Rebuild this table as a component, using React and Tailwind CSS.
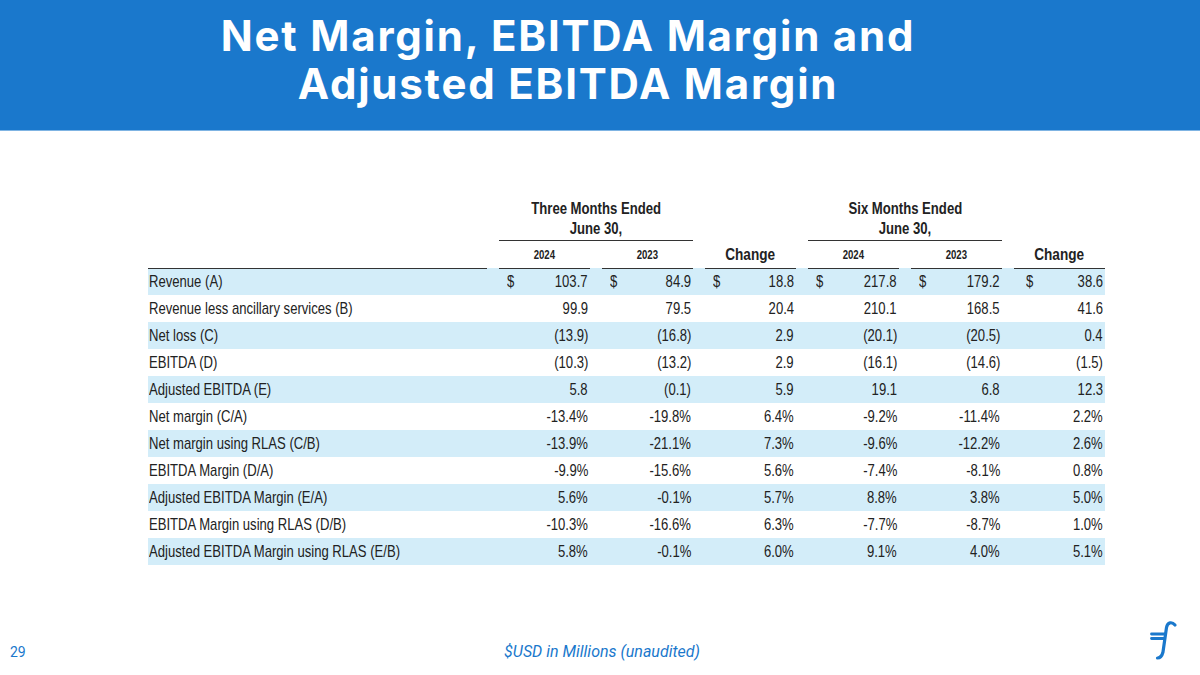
import React from "react";

const sans = { fontFamily: "'Liberation Sans', Arial, sans-serif" };

const rows = [
  ["Revenue (A)", "103.7", "84.9", "18.8", "217.8", "179.2", "38.6"],
  ["Revenue less ancillary services (B)", "99.9", "79.5", "20.4", "210.1", "168.5", "41.6"],
  ["Net loss (C)", "(13.9)", "(16.8)", "2.9", "(20.1)", "(20.5)", "0.4"],
  ["EBITDA (D)", "(10.3)", "(13.2)", "2.9", "(16.1)", "(14.6)", "(1.5)"],
  ["Adjusted EBITDA (E)", "5.8", "(0.1)", "5.9", "19.1", "6.8", "12.3"],
  ["Net margin (C/A)", "-13.4%", "-19.8%", "6.4%", "-9.2%", "-11.4%", "2.2%"],
  ["Net margin using RLAS (C/B)", "-13.9%", "-21.1%", "7.3%", "-9.6%", "-12.2%", "2.6%"],
  ["EBITDA Margin (D/A)", "-9.9%", "-15.6%", "5.6%", "-7.4%", "-8.1%", "0.8%"],
  ["Adjusted EBITDA Margin (E/A)", "5.6%", "-0.1%", "5.7%", "8.8%", "3.8%", "5.0%"],
  ["EBITDA Margin using RLAS (D/B)", "-10.3%", "-16.6%", "6.3%", "-7.7%", "-8.7%", "1.0%"],
  ["Adjusted EBITDA Margin using RLAS (E/B)", "5.8%", "-0.1%", "6.0%", "9.1%", "4.0%", "5.1%"],
];

const gridCols = "grid grid-cols-[339px_repeat(6,91px)] gap-x-3";

function Logo() {
  return (
    <svg width="30" height="42" viewBox="0 0 30 42" fill="none">
      <path
        d="M26 5 C23 1.5 18.5 2 17.5 7.5 L14 32 C13 36 11 38 8.5 38"
        stroke="#1a78cc"
        strokeWidth="3.2"
        strokeLinecap="round"
      />
      <path d="M2.5 14 H15.5 M2.5 18.5 H15" stroke="#1a78cc" strokeWidth="2.8" strokeLinecap="round" />
    </svg>
  );
}

export default function App() {
  return (
    <div className="w-[1200px] h-[675px] bg-white flex flex-col overflow-hidden">
      {/* Title band */}
      <div className="h-[131px] bg-[#1a78cc] border-b border-[#7fb4e3] pt-[12px] pr-[64px] text-center">
        <h1
          className="text-white font-bold text-[42px] leading-[48px] tracking-[1.8px]"
          style={{ fontFamily: "Inter, Roboto, 'Liberation Sans', sans-serif" }}
        >
          Net Margin, EBITDA Margin and
          <br />
          Adjusted EBITDA Margin
        </h1>
      </div>

      {/* Table */}
      <div className="pl-[148px] pt-[68px] text-[#222]" style={sans}>
        <div className="w-fit">
          <div className={gridCols}>
            <div />
            <div className="col-span-2 text-center font-bold text-[16px] leading-[20px] border-b-[1.5px] border-[#333] pb-[1px]">
              <span className="inline-block scale-x-[0.82] whitespace-nowrap">Three Months Ended</span>
              <br />
              <span className="inline-block scale-x-[0.82]">June 30,</span>
            </div>
            <div />
            <div className="col-span-2 text-center font-bold text-[16px] leading-[20px] border-b-[1.5px] border-[#333] pb-[1px]">
              <span className="inline-block scale-x-[0.82] whitespace-nowrap">Six Months Ended</span>
              <br />
              <span className="inline-block scale-x-[0.82]">June 30,</span>
            </div>
            <div />
          </div>
          <div className={`${gridCols} h-[27px]`}>
            <div className="border-b-[1.5px] border-[#333]" />
            {["2024", "2023", "Change", "2024", "2023", "Change"].map((h, i) => (
              <div
                key={i}
                className={`border-b-[1.5px] border-[#333] flex items-center justify-center font-bold ${
                  h === "Change" ? "text-[17px] pt-[1px]" : "text-[12px] pt-[2px]"
                }`}
              >
                <span className="inline-block scale-x-[0.8]">{h}</span>
              </div>
            ))}
          </div>
          {rows.map((r, idx) => (
            <div
              key={idx}
              className={`${gridCols} h-[27px] items-center text-[17px] ${
                idx % 2 === 0 ? "bg-[#d3edf9]" : "bg-white"
              }`}
            >
              <div className="pl-[1px] whitespace-nowrap">
                <span className="inline-block origin-left scale-x-[0.77]">{r[0]}</span>
              </div>
              {r.slice(1).map((v, j) => (
                <div
                  key={j}
                  className={`flex justify-between pr-[2px] ${j === 5 ? "pl-[12px]" : "pl-[8px]"}`}
                >
                  <span className="inline-block origin-left scale-x-[0.77]">{idx === 0 ? "$" : ""}</span>
                  <span className="inline-block origin-right scale-x-[0.77]">{v}</span>
                </div>
              ))}
            </div>
          ))}
        </div>
      </div>

      {/* Footer */}
      <div
        className="mt-auto h-[46px] flex items-center relative text-[#1a78cc]"
        style={{ fontFamily: "Roboto, 'Liberation Sans', sans-serif" }}
      >
        <span className="pl-[10px] text-[14px] w-[100px]">29</span>
        <span className="flex-1 text-center italic text-[16px] pr-[96px]">
          $USD in Millions (unaudited)
        </span>
        <div className="absolute left-[1149px] top-[-9px]">
          <Logo />
        </div>
      </div>
    </div>
  );
}
